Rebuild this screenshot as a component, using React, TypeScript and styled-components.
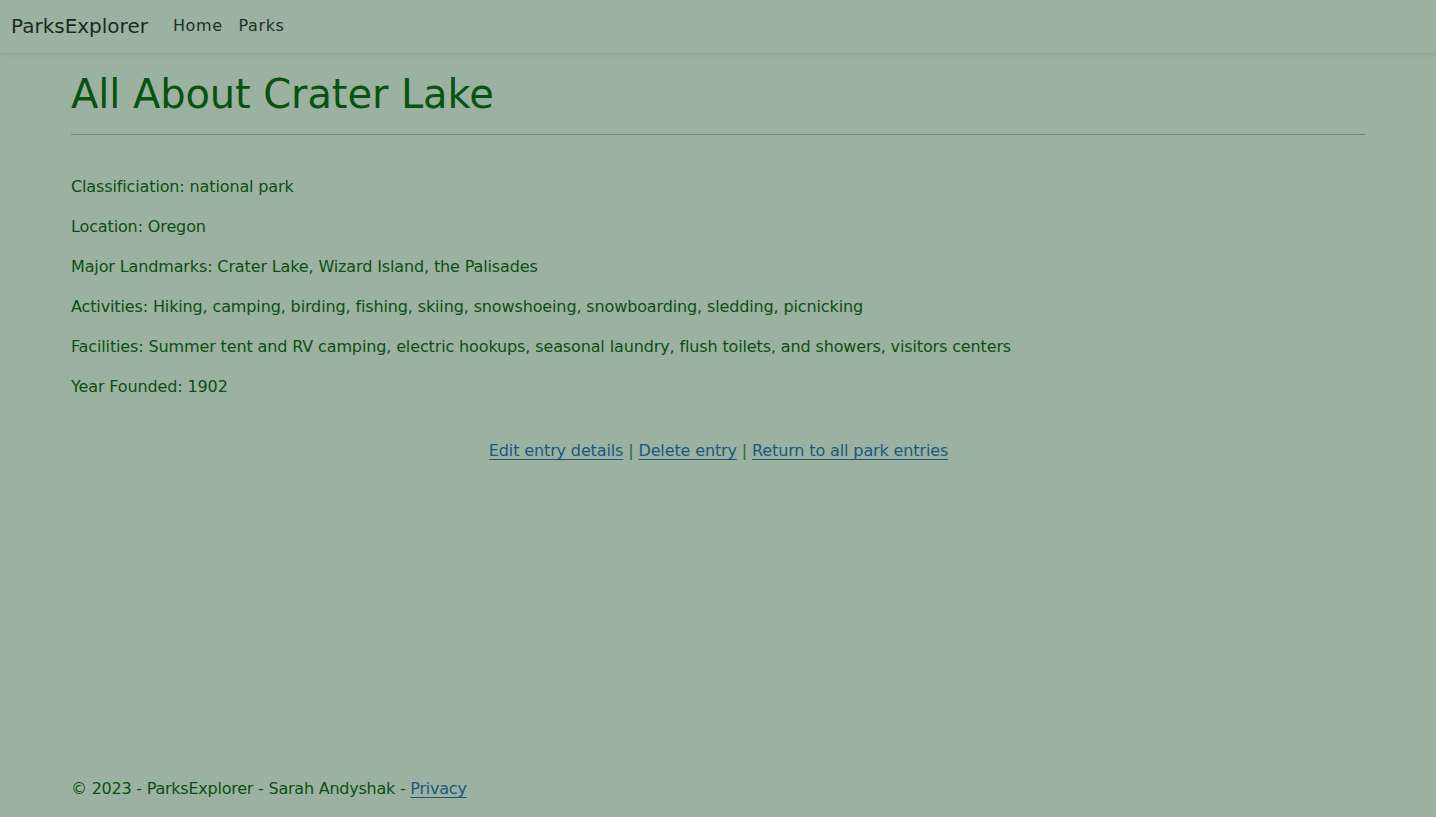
import React from "react";
import styled, { createGlobalStyle } from "styled-components";

const GlobalStyle = createGlobalStyle`
  html, body { margin: 0; padding: 0; }
  body {
    background: #9bb2a0;
    font-family: "DejaVu Sans", "Liberation Sans", sans-serif;
    font-size: 16px;
    line-height: 24px;
    color: #0b4f14;
  }
  * { box-sizing: border-box; }
`;

const Page = styled.div`
  min-height: 100vh;
  display: flex;
  flex-direction: column;
`;

const NavBar = styled.header`
  height: 53px;
  display: flex;
  align-items: center;
  padding: 0 12px 2px 11px;
  background: #9bb2a0;
  box-shadow: 0 1px 4px rgba(0, 0, 0, 0.1);
`;

const Brand = styled.a`
  font-size: 20px;
  line-height: 30px;
  color: #1b2a1f;
  text-decoration: none;
  margin-right: 17px;
`;

const NavList = styled.nav`
  display: flex;
`;

const NavLink = styled.a`
  padding: 8px;
  color: #223026;
  text-decoration: none;
  font-size: 16px;
  letter-spacing: 0.6px;
`;

const Main = styled.main`
  width: 1320px;
  margin: 0 auto;
  padding: 17px 12px 0 13px;
  flex: 1;
`;

const Title = styled.h1`
  margin: 0;
  font-size: 40px;
  line-height: 48px;
  font-weight: 400;
  color: #0a5213;
  letter-spacing: -0.1px;
`;

const Rule = styled.hr`
  margin: 16px 0 40px;
  border: 0;
  border-top: 1px solid #5f8f66;
`;

const Fact = styled.p`
  margin: 0 0 16px;
  letter-spacing: -0.13px;
`;

const Actions = styled.div`
  text-align: center;
  margin-top: 40px;
  letter-spacing: -0.13px;
  color: #2a6a2c;
`;

const TextLink = styled.a`
  color: #1d587a;
  text-decoration: underline;
  text-underline-offset: 3px;
`;

const Footer = styled.footer`
  width: 1320px;
  margin: 0 auto;
  padding: 0 12px 0 13px;
  height: 58px;
  line-height: 60px;
  white-space: nowrap;
  letter-spacing: -0.23px;
`;

const facts = [
  "Classificiation: national park",
  "Location: Oregon",
  "Major Landmarks: Crater Lake, Wizard Island, the Palisades",
  "Activities: Hiking, camping, birding, fishing, skiing, snowshoeing, snowboarding, sledding, picnicking",
  "Facilities: Summer tent and RV camping, electric hookups, seasonal laundry, flush toilets, and showers, visitors centers",
  "Year Founded: 1902",
];

export default function App() {
  return (
    <Page>
      <GlobalStyle />
      <NavBar>
        <Brand href="#">ParksExplorer</Brand>
        <NavList>
          <NavLink href="#">Home</NavLink>
          <NavLink href="#">Parks</NavLink>
        </NavList>
      </NavBar>
      <Main>
        <Title>All About Crater Lake</Title>
        <Rule />
        {facts.map((f) => (
          <Fact key={f}>{f}</Fact>
        ))}
        <Actions>
          <TextLink href="#">Edit entry details</TextLink> |{" "}
          <TextLink href="#">Delete entry</TextLink> |{" "}
          <TextLink href="#">Return to all park entries</TextLink>
        </Actions>
      </Main>
      <Footer>
        © 2023 - ParksExplorer - Sarah Andyshak - <TextLink href="#">Privacy</TextLink>
      </Footer>
    </Page>
  );
}
